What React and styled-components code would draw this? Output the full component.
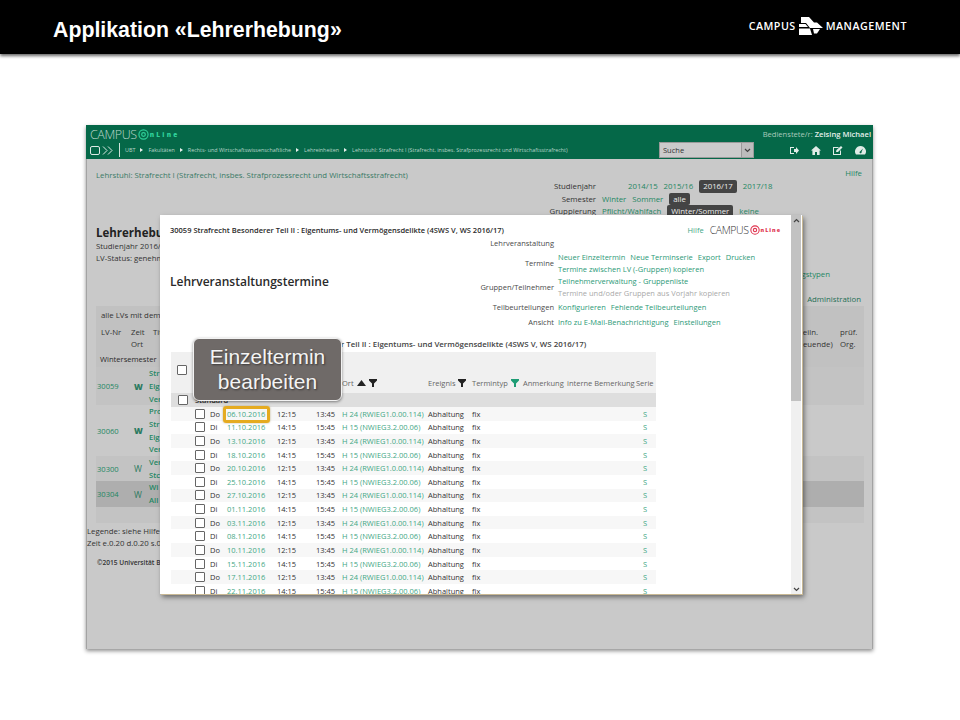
import React from 'react';
import styled, { createGlobalStyle } from 'styled-components';

const Global = createGlobalStyle`
  html, body { margin: 0; padding: 0; background: #fff; }
  body { width: 960px; height: 720px; overflow: hidden; font-family: "Open Sans", "Liberation Sans", sans-serif; }
`;

const TopBar = styled.header`
  height: 54px;
  background: #000;
  box-shadow: 0 2px 3px rgba(0,0,0,.6);
  display: flex;
  align-items: center;
  justify-content: space-between;
  padding: 0 53px;
`;
const Title = styled.h1`
  margin: 6px 0 0;
  font: bold 21.3px "Liberation Sans", Arial, sans-serif;
  color: #fff;
`;
const Brand = styled.div`
  display: flex;
  align-items: center;
  gap: 3px;
  margin: 0 0 2px;
  font: 600 10.7px "Open Sans", sans-serif;
  color: #fff;
  letter-spacing: .5px;
`;
const Shot = styled.main`
  position: relative;
  width: 787px;
  height: 524px;
  margin: 71px 0 0 86px;
  background: #c9c9c9;
  box-shadow: inset 1px 0 #a3a3a3, inset -1px 0 #a3a3a3, 0 2px 4px rgba(0,0,0,.45);
  font-size: 7.8px;
  color: #333;
`;
const GreenBar = styled.div`
  height: 34px;
  background: #056848;
  display: grid;
  grid-template-columns: 1fr auto;
  color: #cfe3da;
`;
const BarLeft = styled.div`
  padding: 2px 0 0 4px;
  display: flex;
  flex-direction: column;
`;
const LogoRow = styled.div`
  display: flex;
  align-items: center;
  height: 15px;
  gap: 1px;
`;
const LogoWord = styled.span`
  font: 300 ${p => p.$size || 12.5}px "Open Sans", sans-serif;
  letter-spacing: -.4px;
  color: ${p => p.$color || '#bcd6ca'};
`;
const LogoOn = styled.span`
  font: 800 ${p => p.$size || 6.5}px "Open Sans", sans-serif;
  letter-spacing: ${p => p.$track || 2.2}px;
  color: ${p => p.$color || '#2fd09a'};
`;
const Crumbs = styled.div`
  display: flex;
  align-items: center;
  height: 14px;
  margin-top: 1px;
  font-size: 5.4px;
  color: #b9d5c9;
  white-space: nowrap;
`;
const NavIcons = styled.div`
  display: flex;
  align-items: center;
  gap: 1px;
  margin-right: 5px;
  padding-right: 6px;
  height: 14px;
  border-right: 1px solid #cfe3da;
`;
const Crumb = styled.span`
  display: inline-flex;
  align-items: center;
  &:not(:last-child)::after {
    content: "";
    margin: 0 5px;
    border-left: 3px solid #e6f0ec;
    border-top: 2px solid transparent;
    border-bottom: 2px solid transparent;
  }
`;
const BarRight = styled.div`
  display: flex;
  flex-direction: column;
  align-items: flex-end;
  padding: 3px 2px 0 0;
`;
const UserLine = styled.div`
  font-size: 7.6px;
  line-height: 12px;
  color: #a9cabc;
  b { color: #e4efea; font-weight: 600; }
`;
const ToolRow = styled.div`
  display: flex;
  align-items: center;
  margin-top: 2px;
`;
const SearchBox = styled.div`
  width: 95px;
  height: 16px;
  box-sizing: border-box;
  margin-right: 36px;
  background: #cbcbcb;
  border: 1px solid #9a9a9a;
  display: flex;
  align-items: center;
  justify-content: space-between;
  padding-left: 3px;
  font-size: 7.5px;
  color: #333;
`;
const SearchArrow = styled.span`
  width: 11px;
  height: 14px;
  background: #bdbdbd;
  border-left: 1px solid #999;
  display: flex;
  align-items: center;
  justify-content: center;
`;
const ToolIcons = styled.div`
  display: flex;
  gap: 12px;
  padding-right: 5px;
  color: #e0ece7;
`;
const Body = styled.div`
  padding: 10px 10px 0;
`;
const PathRow = styled.div`
  display: flex;
  justify-content: space-between;
  line-height: 12px;
  font-size: 7.8px;
  color: #3a7a66;
`;
const HelpLink = styled.span`
  color: #1f8763;
  margin: -2px 1px 0 0;
`;
const Green = styled.span`
  color: #1f8763;
`;
const FilterGrid = styled.div`
  width: 400px;
  margin: -1px 0 0 409px;
  height: 34px;
  font-size: 7.8px;
  line-height: 12.6px;
`;
const FilterRow = styled.div`
  display: flex;
  gap: 6px;
  align-items: center;
  white-space: nowrap;
`;
const FilterLabel = styled.span`
  width: 91px;
  text-align: right;
  flex: none;
`;
const YearGap = styled.span`
  width: 20px;
`;
const Pill = styled.span`
  background: #444;
  color: #eee;
  border-radius: 2px;
  padding: 0 4px;
`;
const HeadBlock = styled.div`
  margin-top: 12px;
  height: 80px;
  line-height: 12px;
`;
const HeadTitle = styled.div`
  font-size: 11.5px;
  font-weight: 700;
  color: #222;
  line-height: 14px;
`;
const AsideLine = styled.div`
  position: absolute;
  right: 43px;
  top: 144px;
  color: #1f8763;
`;
const AdminLine = styled.div`
  position: absolute;
  right: 12px;
  top: 169px;
  color: #1f6f55;
`;
const Panel = styled.div`
  width: 768px;
  height: 217px;
`;
const PanelHead = styled.div`
  height: 61px;
  box-sizing: border-box;
  padding: 3px 0 0 5px;
  background: #c1c1c1;
  line-height: 12.5px;
  display: flex;
  flex-direction: column;
`;
const PanelCols = styled.div`
  display: grid;
  grid-template-columns: 30px 22px 1fr 62px 24px;
  margin-top: 4px;
`;
const CenterCell = styled.span`
  text-align: center;
  white-space: nowrap;
`;
const SemRow = styled.div`
  font-size: 7.6px;
  margin: 2px 0 0 -1px;
  color: #2a2a2a;
  font-weight: 500;
`;
const Band = styled.div`
  height: ${p => p.$h}px;
  background: ${p => p.$bg};
  display: grid;
  grid-template-columns: 38px 15px 1fr;
  align-items: center;
  color: #1f8763;
`;
const BandId = styled.span`
  padding-left: 1px;
  font-size: 7.6px;
`;
const BandW = styled.span`
  font-weight: ${p => p.$bold ? 800 : 400};
  font-size: 8.5px;
  color: #2b7a60;
`;
const Cut = styled.span`
  font-size: 7.6px;
  line-height: 12.8px;
  font-weight: 600;
  white-space: pre-line;
`;
const Foot = styled.div`
  margin: 2px 0 0 -9px;
  line-height: 12px;
  color: #333;
`;
const Copy = styled.div`
  margin: 9px 0 0 1px;
  font-size: 6.6px;
  font-weight: 600;
  color: #333;
`;

const Modal = styled.section`
  position: absolute;
  left: 74px;
  top: 90px;
  width: 642px;
  height: 379px;
  background: #fff;
  overflow: hidden;
  box-shadow: 1px 1px 0 #c8b894, 2px 3px 5px rgba(0,0,0,.5);
  font-size: 7.5px;
  color: #3a3a3a;
`;
const ScrollTrack = styled.div`
  position: absolute;
  top: 0;
  right: 1px;
  width: 10px;
  height: 100%;
  background: #f0f0f0;
  display: flex;
  flex-direction: column;
  justify-content: space-between;
`;
const Thumb = styled.div`
  height: 183px;
  background: #c2c2c2;
  display: flex;
  align-items: flex-start;
  justify-content: center;
  padding-top: 3px;
`;
const ArrowBottom = styled.div`
  height: 10px;
  display: flex;
  align-items: center;
  justify-content: center;
`;
const ModalTop = styled.div`
  display: flex;
  justify-content: space-between;
  align-items: center;
  height: 15px;
  padding: 7px 21px 1px 10px;
`;
const ModalCode = styled.div`
  font-size: 7.5px;
  font-weight: 600;
  color: #2a2a2a;
  white-space: nowrap;
`;
const ModalTopRight = styled.div`
  display: flex;
  align-items: center;
  gap: 6px;
`;
const MiniLogo = styled.span`
  display: inline-flex;
  align-items: center;
  gap: 1px;
`;
const ModalHead = styled.div`
  display: grid;
  grid-template-columns: 198px 1fr;
  padding-left: 10px;
  height: 99px;
`;
const ModalTitle = styled.h2`
  margin: 36px 0 0;
  font-size: 12px;
  font-weight: 600;
  color: #2a2a2a;
  white-space: nowrap;
  line-height: 16px;
`;
const Links = styled.div`
  display: grid;
  grid-template-columns: 186px 1fr;
  column-gap: 4px;
  align-content: start;
  line-height: 12px;
  margin-top: -1px;
`;
const LinkLabel = styled.div`
  text-align: right;
  align-self: center;
  color: #4a4a4a;
  white-space: nowrap;
  margin-bottom: ${p => p.$mb || 0}px;
`;
const LinkCell = styled.div`
  color: #2c9a78;
  margin-bottom: ${p => p.$mb || 0}px;
  min-height: 12px;
  white-space: nowrap;
  span { margin-right: 5px; }
`;
const Muted = styled.div`
  color: #a9a9a9;
`;
const SubCode = styled.div`
  height: 14px;
  padding-left: 75px;
  font-size: 7.9px;
  font-weight: 600;
  color: #444;
  line-height: 13px;
  white-space: nowrap;
  margin-top: 1px;
`;
const Table = styled.div`
  width: 485px;
  margin-left: 11px;
`;
const cols = '24px 15px 17px 50px 39px 26px 86px 44px 171px 13px';
const THead = styled.div`
  height: 41px;
  background: #f0f0f0;
  display: grid;
  grid-template-columns: 24px 147px 86px 44px 51px 44px 69px 20px;
  align-items: end;
  white-space: nowrap;
  color: #666;
  font-size: 7.5px;
  padding-bottom: 5px;
  box-sizing: border-box;
`;
const HeadCheck = styled.div`
  align-self: center;
  padding: 0 0 0 6px;
`;
const HeadCell = styled.div`
  display: flex;
  align-items: center;
  gap: 3px;
`;
const GroupRow = styled.div`
  height: 14px;
  background: #dedede;
  display: flex;
  align-items: center;
  padding-left: 7px;
  gap: 7px;
  font-weight: 600;
  color: #333;
`;
const Row = styled.div`
  height: 13.62px;
  display: grid;
  grid-template-columns: ${cols};
  align-items: center;
  background: ${p => p.$odd ? '#f7f7f7' : '#fff'};
  white-space: nowrap;
  color: #333;
`;
const Check = styled.span`
  display: block;
  width: 8px;
  height: 8px;
  border: 1px solid #666;
  border-radius: 1px;
  background: #fff;
`;
const Link = styled.span`
  color: #3fa785;
`;
const Callout = styled.div`
  position: absolute;
  left: 107px;
  top: 213px;
  width: 149px;
  height: 63px;
  box-sizing: border-box;
  padding-bottom: 2px;
  background: #6f6a68;
  border: 1px solid #f2f2f2;
  border-radius: 6px;
  box-shadow: 0 1px 3px rgba(0,0,0,.45);
  color: #f4f4f4;
  font: 21px/25px "Liberation Sans", Arial, sans-serif;
  text-align: center;
  text-shadow: 1px 1px 2px rgba(0,0,0,.5);
  display: flex;
  align-items: center;
  justify-content: center;
`;
const Marker = styled.div`
  position: absolute;
  left: 137px;
  top: 281px;
  width: 47px;
  height: 17px;
  box-sizing: border-box;
  border: 3px solid #e5ab20;
  border-radius: 3px;
  box-shadow: 0 0 2px rgba(120,90,0,.5);
`;

const Funnel = ({ color = '#222' }) => (
  <svg width="8" height="8" viewBox="0 0 8 8"><path d="M0 0h8v1.4L5 4.4V8H3V4.4L0 1.4z" fill={color} /></svg>
);
const Tri = () => (
  <svg width="9" height="6" viewBox="0 0 9 6"><path d="M4.5 0L9 6H0z" fill="#222" /></svg>
);
const Ring = ({ size = 11, color = '#2fd09a' }) => (
  <svg width={size} height={size} viewBox="0 0 12 12">
    <circle cx="6" cy="6" r="5" fill="none" stroke={color} strokeWidth="1.3" />
    <circle cx="6" cy="6" r="2" fill="none" stroke={color} strokeWidth="1.3" />
  </svg>
);
const CmLogo = () => (
  <svg width="24" height="18" viewBox="0 0 24 18" fill="#fff">
    <path d="M2 0h8l5 5.500h3l6 5.500H11L7 6H2z" />
    <path d="M0 7h6.500L9 10H0z" />
    <path d="M0 11.500h11l2 6.500H0z" />
    <path d="M14 12h7l-3 4.500h-3z" />
  </svg>
);
const Chevrons = () => (
  <svg width="11" height="9" viewBox="0 0 11 9" fill="none" stroke="#dceae4" strokeWidth="1"><path d="M1 .5l4 4-4 4M6 .5l4 4-4 4" /></svg>
);
const Square = () => (
  <svg width="11" height="9" viewBox="0 0 11 9" fill="none" stroke="#dceae4" strokeWidth="1"><rect x=".5" y=".5" width="9" height="8" rx="1.5" /></svg>
);
const SignOut = () => (
  <svg width="9" height="9" viewBox="0 0 9 9"><path d="M0 1h4v1H1v5h3v1H0zM4 3h2V1l3 3.5L6 8V6H4z" fill="currentColor" /></svg>
);
const Home = () => (
  <svg width="10" height="9" viewBox="0 0 10 9"><path d="M5 0l5 4.5H8.6V9H6V6H4v3H1.4V4.500H0z" fill="currentColor" /></svg>
);
const Edit = () => (
  <svg width="10" height="9" viewBox="0 0 10 9"><path d="M0 1h6L5 2H1v6h6V5l1-1v5H0z" fill="currentColor" /><path d="M3 6l.5-2L8 0l1.500 1.500L5 6z" fill="currentColor" /></svg>
);
const Gauge = () => (
  <svg width="11" height="9" viewBox="0 0 11 9"><path d="M5.500 0a5.500 5.500 0 0 1 4.500 8.600H1A5.500 5.500 0 0 1 5.500 0zM5 5.500a1 1 0 1 0 1.500.5L8 2.500z" fill="currentColor" fillRule="evenodd" /></svg>
);
const ChevDown = () => (
  <svg width="7" height="5" viewBox="0 0 7 5" fill="none" stroke="#444" strokeWidth="1.200"><path d="M1 1l2.500 2.500L6 1" /></svg>
);
const ChevUp = () => (
  <svg width="7" height="5" viewBox="0 0 7 5" fill="none" stroke="#444" strokeWidth="1.200"><path d="M1 4l2.500-2.500L6 4" /></svg>
);

const dates = ['06.10.2016','11.10.2016','13.10.2016','18.10.2016','20.10.2016','25.10.2016','27.10.2016','01.11.2016','03.11.2016','08.11.2016','10.11.2016','15.11.2016','17.11.2016','22.11.2016'];

const bands = [
  { id: '30059', bold: true, h: 38, bg: '#c3c3c3', cut: 'Str\nEig\nVer' },
  { id: '30060', bold: true, h: 51, bg: '#c9c9c9', cut: 'Pro\nStr\nEig\nVer' },
  { id: '30300', bold: false, h: 25, bg: '#c3c3c3', cut: 'Ver\nStc' },
  { id: '30304', bold: false, h: 26, bg: '#aeaeae', cut: 'Wi\nAll' },
];

export default function App() {
  return (
    <>
      <Global />
      <TopBar>
        <Title>Applikation «Lehrerhebung»</Title>
        <Brand>CAMPUS <CmLogo /> MANAGEMENT</Brand>
      </TopBar>
      <Shot>
        <GreenBar>
          <BarLeft>
            <LogoRow><LogoWord>CAMPUS</LogoWord><Ring /><LogoOn>nLine</LogoOn></LogoRow>
            <Crumbs>
              <NavIcons><Square /><Chevrons /></NavIcons>
              <Crumb>UBT</Crumb><Crumb>Fakultäten</Crumb><Crumb>Rechts- und Wirtschaftswissenschaftliche</Crumb><Crumb>Lehreinheiten</Crumb>
              <Crumb>Lehrstuhl: Strafrecht I (Strafrecht, insbes. Strafprozessrecht und Wirtschaftsstrafrecht)</Crumb>
            </Crumbs>
          </BarLeft>
          <BarRight>
            <UserLine>Bedienstete/r: <b>Zeising Michael</b></UserLine>
            <ToolRow>
              <SearchBox>Suche<SearchArrow><ChevDown /></SearchArrow></SearchBox>
              <ToolIcons><SignOut /><Home /><Edit /><Gauge /></ToolIcons>
            </ToolRow>
          </BarRight>
        </GreenBar>
        <Body>
          <PathRow>
            <span>Lehrstuhl: Strafrecht I (Strafrecht, insbes. Strafprozessrecht und Wirtschaftsstrafrecht)</span>
            <HelpLink>Hilfe</HelpLink>
          </PathRow>
          <FilterGrid>
            <FilterRow><FilterLabel>Studienjahr</FilterLabel><YearGap /><Green>2014/15</Green><Green>2015/16</Green><Pill>2016/17</Pill><Green>2017/18</Green></FilterRow>
            <FilterRow><FilterLabel>Semester</FilterLabel><Green>Winter</Green><Green>Sommer</Green><Pill>alle</Pill></FilterRow>
            <FilterRow><FilterLabel>Gruppierung</FilterLabel><Green>Pflicht/Wahlfach</Green><Pill>Winter/Sommer</Pill><Green>keine</Green></FilterRow>
          </FilterGrid>
          <HeadBlock>
            <HeadTitle>Lehrerhebung</HeadTitle>
            <div>Studienjahr 2016/17</div>
            <div>LV-Status: genehmigt</div>
          </HeadBlock>
          <AsideLine>Lehrveranstaltungstypen</AsideLine>
          <AdminLine>Administration</AdminLine>
          <Panel>
            <PanelHead>
              <span>alle LVs mit dem Status genehmigt</span>
              <PanelCols>
                <span>LV-Nr</span><span>Zeit<br />Ort</span><span>Titel</span>
                <CenterCell>teiln.<br />(Betreuende)</CenterCell><span>prüf.<br />Org.</span>
              </PanelCols>
              <SemRow>Wintersemester</SemRow>
            </PanelHead>
            {bands.map(b => (
              <Band key={b.id} $h={b.h} $bg={b.bg}>
                <BandId>{b.id}</BandId>
                <BandW $bold={b.bold}>W</BandW>
                <Cut>{b.cut}</Cut>
              </Band>
            ))}
            <Band $h={16} $bg="#c3c3c3" />
          </Panel>
          <Foot>Legende: siehe Hilfe<br />Zeit e.0.20 d.0.20 s.0.10</Foot>
          <Copy>©2015 Universität Bayreuth</Copy>
        </Body>
        <Modal>
          <ScrollTrack>
            <Thumb><ChevUp /></Thumb>
            <ArrowBottom><ChevDown /></ArrowBottom>
          </ScrollTrack>
          <ModalTop>
            <ModalCode>30059 Strafrecht Besonderer Teil II : Eigentums- und Vermögensdelikte (4SWS V, WS 2016/17)</ModalCode>
            <ModalTopRight>
              <Link>Hilfe</Link>
              <MiniLogo>
                <LogoWord $size={10.5} $color="#333">CAMPUS</LogoWord>
                <Ring size={10} color="#e0334f" />
                <LogoOn $size={5.4} $track={1} $color="#e0334f">nLine</LogoOn>
              </MiniLogo>
            </ModalTopRight>
          </ModalTop>
          <ModalHead>
            <ModalTitle>Lehrveranstaltungstermine</ModalTitle>
            <Links>
              <LinkLabel $mb={2}>Lehrveranstaltung</LinkLabel><LinkCell $mb={2} />
              <LinkLabel>Termine</LinkLabel>
              <LinkCell><span>Neuer Einzeltermin</span><span>Neue Terminserie</span><span>Export</span><span>Drucken</span><br />Termine zwischen LV (-Gruppen) kopieren</LinkCell>
              <LinkLabel $mb={2}>Gruppen/Teilnehmer</LinkLabel>
              <LinkCell $mb={2}>Teilnehmerverwaltung - Gruppenliste<Muted>Termine und/oder Gruppen aus Vorjahr kopieren</Muted></LinkCell>
              <LinkLabel $mb={3}>Teilbeurteilungen</LinkLabel>
              <LinkCell $mb={3}><span>Konfigurieren</span><span>Fehlende Teilbeurteilungen</span></LinkCell>
              <LinkLabel>Ansicht</LinkLabel>
              <LinkCell><span>Info zu E-Mail-Benachrichtigung</span><span>Einstellungen</span></LinkCell>
            </Links>
          </ModalHead>
          <SubCode>30059 Strafrecht Besonderer Teil II : Eigentums- und Vermögensdelikte (4SWS V, WS 2016/17)</SubCode>
          <Table>
            <THead>
              <HeadCheck><Check /></HeadCheck>
              <HeadCell>Datum</HeadCell>
              <HeadCell>Ort <Tri /><Funnel /></HeadCell>
              <HeadCell>Ereignis <Funnel /></HeadCell>
              <HeadCell>Termintyp <Funnel color="#1e9c74" /></HeadCell>
              <HeadCell>Anmerkung</HeadCell>
              <HeadCell>interne Bemerkung</HeadCell>
              <HeadCell>Serie</HeadCell>
            </THead>
            <GroupRow><Check />Standard</GroupRow>
            {dates.map((d, i) => {
              const odd = i % 2 === 0;
              return (
                <Row key={d} $odd={odd}>
                  <span />
                  <Check />
                  <span>{odd ? 'Do' : 'Di'}</span>
                  <Link>{d}</Link>
                  <span>{odd ? '12:15' : '14:15'}</span>
                  <span>{odd ? '13:45' : '15:45'}</span>
                  <Link>{odd ? 'H 24 (RWIEG1.0.00.114)' : 'H 15 (NWIEG3.2.00.06)'}</Link>
                  <span>Abhaltung</span>
                  <span>fix</span>
                  <Link>S</Link>
                </Row>
              );
            })}
          </Table>
        </Modal>
        <Callout>Einzeltermin<br />bearbeiten</Callout>
        <Marker />
      </Shot>
    </>
  );
}
